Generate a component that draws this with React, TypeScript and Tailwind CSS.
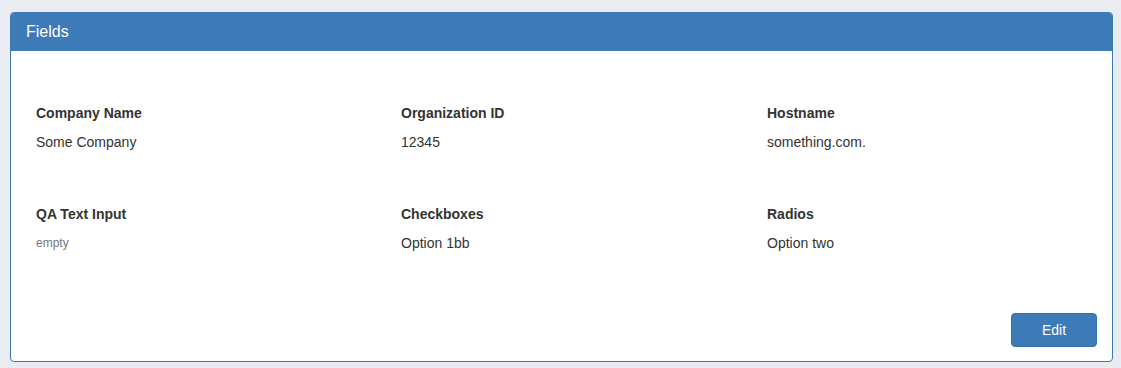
export default function App() {
  const fields = [
    { label: "Company Name", value: "Some Company" },
    { label: "Organization ID", value: "12345" },
    { label: "Hostname", value: "something.com." },
    { label: "QA Text Input", value: "empty", muted: true },
    { label: "Checkboxes", value: "Option 1bb" },
    { label: "Radios", value: "Option two" },
  ];
  return (
    <div
      className="w-[1121px] h-[368px] bg-[#e9ecf0] pt-[12px] px-[10px]"
      style={{ fontFamily: '"Liberation Sans", Arial, sans-serif' }}
    >
      <div className="w-[1103px] h-[350px] rounded-[4px] border border-[#3f79b5] bg-white flex flex-col overflow-hidden">
        <div className="h-[38px] bg-[#3d7ab8] px-[15px] flex items-center text-[16px] text-white">
          Fields
        </div>
        <div className="flex-1 flex flex-col pt-[52px] pl-[25px] pr-[15px] pb-[14px]">
          <div className="grid grid-cols-[365px_366px_1fr] gap-y-[52px]">
            {fields.map((f) => (
              <div key={f.label} className="flex flex-col gap-[9px]">
                <div className="text-[14px] leading-[20px] font-bold text-[#333]">{f.label}</div>
                {f.muted ? (
                  <div className="text-[12px] leading-[20px] text-[#777]">{f.value}</div>
                ) : (
                  <div className="text-[14px] leading-[20px] text-[#333]">{f.value}</div>
                )}
              </div>
            ))}
          </div>
          <div className="mt-auto flex justify-end">
            <button className="w-[86px] h-[34px] rounded-[4px] bg-[#3d7ab8] border border-[#3670ab] text-white text-[14px]">
              Edit
            </button>
          </div>
        </div>
      </div>
    </div>
  );
}
